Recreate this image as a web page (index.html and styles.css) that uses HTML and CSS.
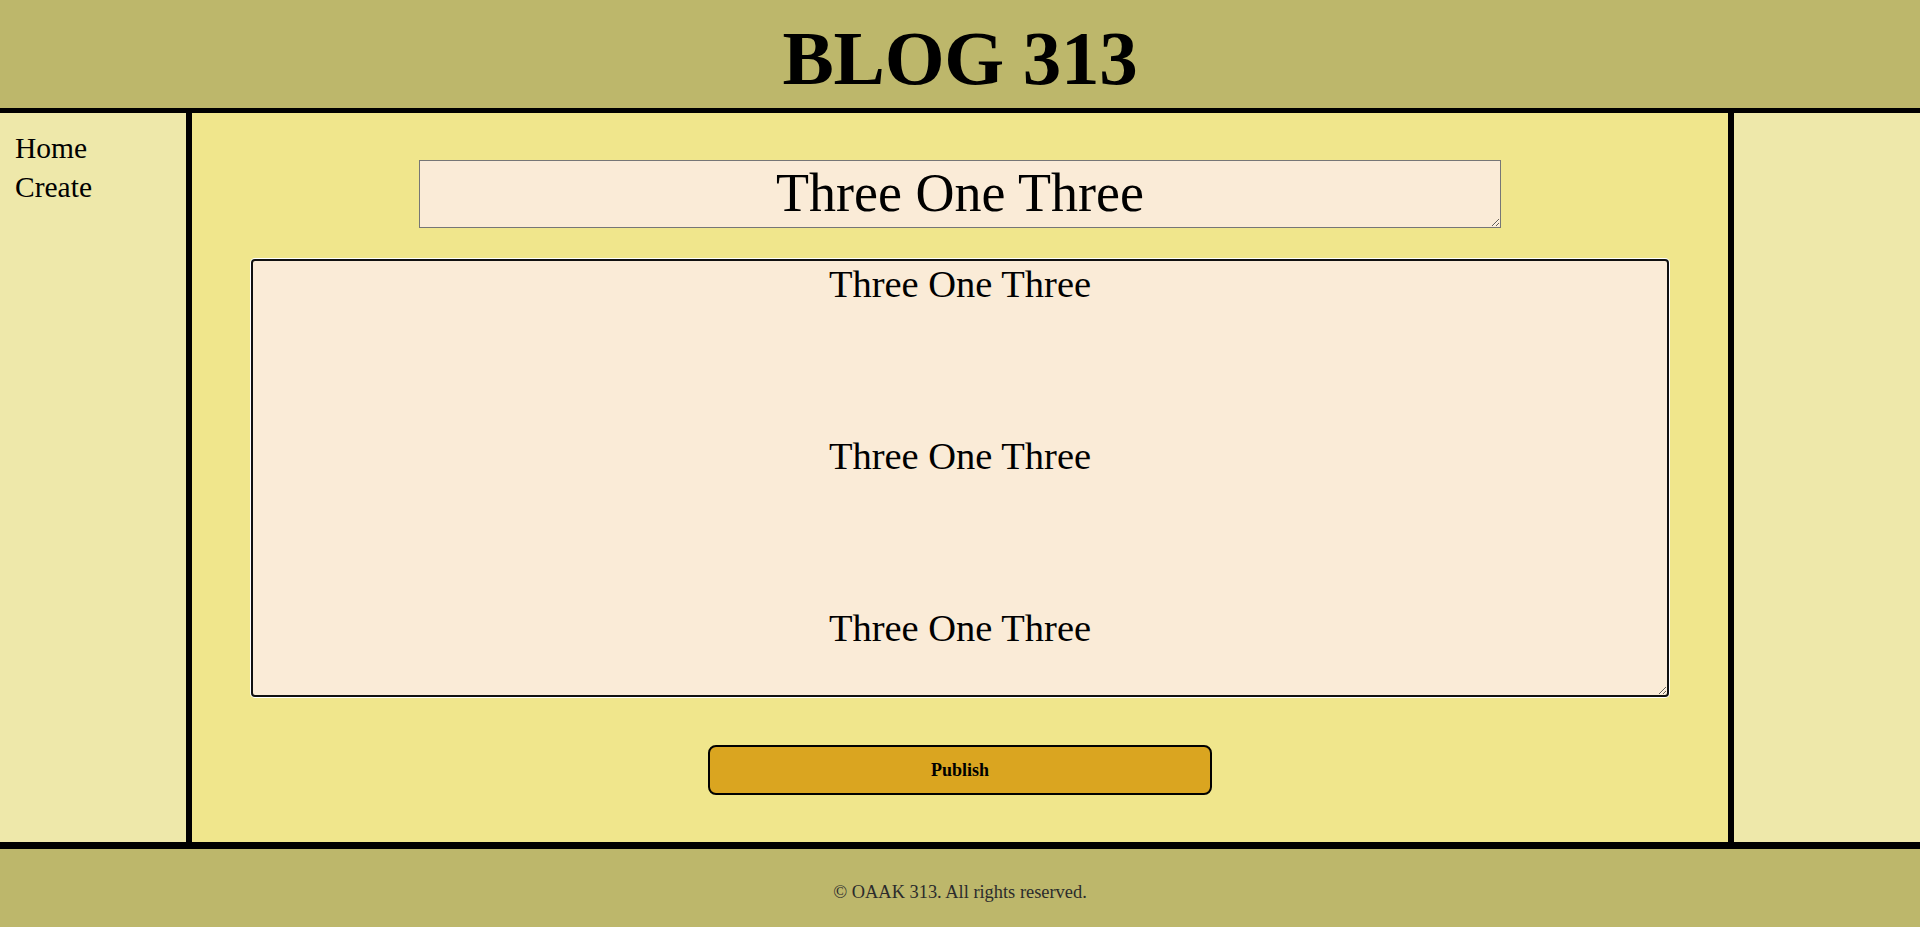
FILE: index.html
```html
<!DOCTYPE html>
<html lang="en">
<head>
<meta charset="utf-8">
<title>BLOG 313</title>
<link rel="stylesheet" href="styles.css">
</head>
<body>
<header class="site-header">
  <h1 class="site-title">BLOG 313</h1>
</header>
<div class="layout">
  <nav class="sidebar sidebar-left">
    <ul class="nav-list">
      <li><a class="nav-link" href="#">Home</a></li>
      <li><a class="nav-link" href="#">Create</a></li>
    </ul>
  </nav>
  <main class="content">
    <form class="editor">
      <textarea class="title-input">Three One Three</textarea>
      <textarea class="body-input">Three One Three



Three One Three



Three One Three</textarea>
      <button class="publish" type="button">Publish</button>
    </form>
  </main>
  <aside class="sidebar sidebar-right"></aside>
</div>
<footer class="site-footer">
  <p class="copyright">© OAAK 313. All rights reserved.</p>
</footer>
</body>
</html>
```

FILE: styles.css
```css
* {
  box-sizing: border-box;
}

html, body {
  margin: 0;
  padding: 0;
}

body {
  min-height: 100vh;
  display: flex;
  flex-direction: column;
  font-family: "Liberation Serif", "DejaVu Serif", serif;
  color: #000;
  background: #bdb76b;
}

.site-header {
  height: 113px;
  background: #bdb76b;
  border-bottom: 5px solid #000;
  display: flex;
  align-items: center;
  justify-content: center;
  padding-top: 9px;
}

.site-title {
  margin: 0;
  font-family: "Liberation Serif", serif;
  font-weight: bold;
  font-size: 77px;
  line-height: 1;
  letter-spacing: -0.3px;
}

.layout {
  flex: 1;
  display: grid;
  grid-template-columns: 192px 1fr 192px;
  min-height: 729px;
}

.sidebar {
  background: #eee8aa;
}

.sidebar-left {
  border-right: 6px solid #000;
}

.sidebar-right {
  border-left: 6px solid #000;
}

.nav-list {
  list-style: none;
  margin: 0;
  padding: 16px 15px;
}

.nav-link {
  font-family: "Liberation Serif", serif;
  font-size: 29.5px;
  line-height: 39px;
  color: #000;
  text-decoration: none;
}

.content {
  background: #f0e68c;
}

.editor {
  display: flex;
  flex-direction: column;
  align-items: center;
  padding-top: 47px;
}

.title-input {
  width: 1082px;
  height: 68px;
  border: 1px solid #767676;
  padding: 2px;
  background: #faebd7;
  font-family: "Liberation Serif", serif;
  font-size: 54px;
  line-height: 61px;
  text-align: center;
  color: #000;
  overflow: hidden;
  margin: 0;
}

.body-input {
  width: 1418px;
  height: 438px;
  margin: 31px 0 0 0;
  border: 2px solid #101010;
  border-radius: 4px;
  box-shadow: 0 0 0 1px #ffffff;
  padding: 2px;
  background: #faebd7;
  font-family: "Liberation Serif", serif;
  font-size: 38.5px;
  line-height: 43px;
  text-align: center;
  color: #000;
  overflow: hidden;
  outline: none;
}

.publish {
  width: 504px;
  height: 50px;
  margin-top: 48px;
  background: #daa520;
  border: 2px solid #000;
  border-radius: 8px;
  font-family: "Liberation Serif", serif;
  font-weight: bold;
  font-size: 18px;
  color: #000;
  cursor: pointer;
}

.site-footer {
  height: 85px;
  background: #bdb76b;
  border-top: 7px solid #000;
  display: flex;
  align-items: center;
  justify-content: center;
  padding-top: 9px;
}

.copyright {
  margin: 0;
  font-family: "Liberation Serif", serif;
  font-size: 18.4px;
  color: #2b2b2b;
}
```
